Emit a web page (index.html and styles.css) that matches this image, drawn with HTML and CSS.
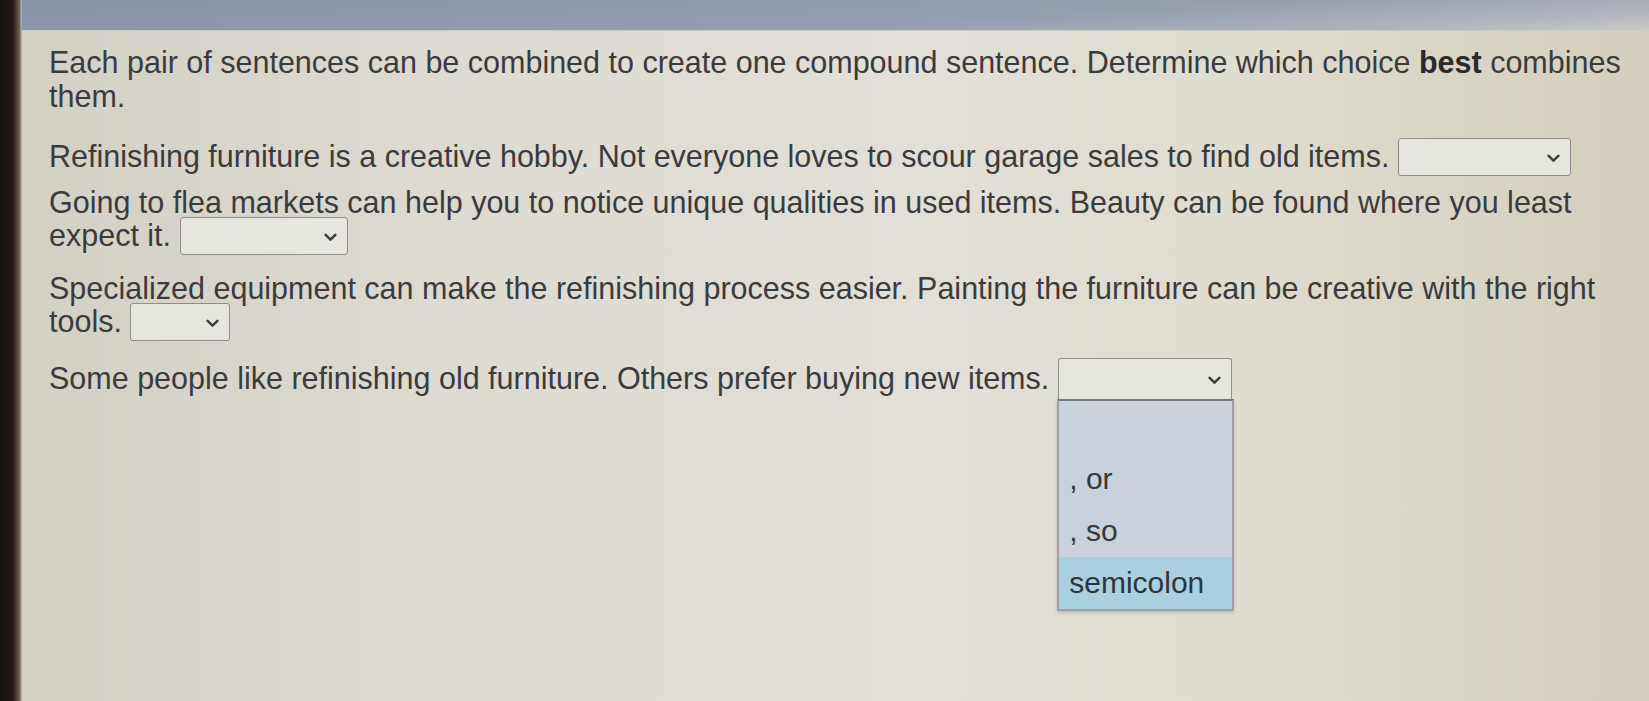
FILE: index.html
```html
<!DOCTYPE html>
<html>
<head>
<meta charset="utf-8">
<link rel="stylesheet" href="styles.css">
</head>
<body>
<div class="screen">
  <div class="bezel"></div>
  <div class="main">
    <div class="topbar"></div>
    <div class="content">
      <p class="intro">Each pair of sentences can be combined to create one compound sentence. Determine which choice <b>best</b> combines<br>them.</p>
      <p class="q q1">Refinishing furniture is a creative hobby. Not everyone loves to scour garage sales to find old items. <span class="sel w1"><svg class="chev" viewBox="0 0 12 8"><polyline points="1.5,1.5 6,6 10.5,1.5"/></svg></span></p>
      <p class="q q2">Going to flea markets can help you to notice unique qualities in used items. Beauty can be found where you least expect it. <span class="sel w2"><svg class="chev" viewBox="0 0 12 8"><polyline points="1.5,1.5 6,6 10.5,1.5"/></svg></span></p>
      <p class="q q3">Specialized equipment can make the refinishing process easier. Painting the furniture can be creative with the right tools. <span class="sel w3"><svg class="chev" viewBox="0 0 12 8"><polyline points="1.5,1.5 6,6 10.5,1.5"/></svg></span></p>
      <p class="q q4">Some people like refinishing old furniture. Others prefer buying new items. <span class="sel w4 open"><svg class="chev" viewBox="0 0 12 8"><polyline points="1.5,1.5 6,6 10.5,1.5"/></svg>
        <span class="list">
          <span class="opt blank"></span>
          <span class="opt">, or</span>
          <span class="opt">, so</span>
          <span class="opt hi">semicolon</span>
        </span>
      </span></p>
    </div>
  </div>
</div>
</body>
</html>
```
FILE: styles.css
```css
html, body {
  margin: 0;
  padding: 0;
  width: 1649px;
  height: 701px;
  overflow: hidden;
}
body {
  font-family: "Liberation Sans", Arial, sans-serif;
  background: #d9d7cd;
}
.screen {
  display: flex;
  height: 701px;
}
.bezel {
  width: 22px;
  flex: none;
  background: linear-gradient(90deg, #161111 0%, #241a18 60%, #6b5f58 88%, #c2bdb3 100%);
}
.main {
  flex: 1;
  display: flex;
  flex-direction: column;
  background: linear-gradient(90deg, #d3d0c6 0%, #dcdad1 25%, #e1dfd7 55%, #dfdcd0 75%, #d4cfbc 100%);
}
.topbar {
  height: 30px;
  flex: none;
  background: linear-gradient(176deg, #8a93a6 0%, #959eaf 60%, #aeb2bb 85%, #c9c9c5 100%);
  border-bottom: 1px solid #c9c9c5;
}
.content {
  padding: 14px 16px 0 27px;
  color: #3b3b3d;
  font-size: 30.5px;
  line-height: 33px;
}
.content p {
  margin: 0 0 16px 0;
}
.content p.intro { margin-bottom: 27px; line-height: 34px; }
.content p.q1 { margin-bottom: 13px; }
.content p.q2 { margin-bottom: 20px; }
.content p.q3 { margin-bottom: 24px; }
.intro b {
  color: #2a2a2d;
}
.sel {
  position: relative;
  display: inline-block;
  vertical-align: -3px;
  height: 38px;
  box-sizing: border-box;
  border: 1.5px solid #8d8d8b;
  border-radius: 3px;
  background: #e6e5de;
  margin: -6px 0;
}
.w1 { width: 173px; }
.w2 { width: 168px; }
.w3 { width: 100px; }
.w4 { width: 174px; height: 42px; margin: -8px 0; }
.chev {
  position: absolute;
  right: 10px;
  top: 50%;
  width: 13px;
  height: 9px;
  margin-top: -3px;
  fill: none;
  stroke: #3c3c3e;
  stroke-width: 2.3;
  stroke-linecap: round;
  stroke-linejoin: round;
}
.open {
  border-bottom-color: #5f5f60;
  border-radius: 3px 3px 0 0;
}
.list {
  position: absolute;
  left: -1.5px;
  top: 40px;
  width: 177px;
  box-sizing: border-box;
  border: 2px solid #9ea2a8;
  border-top: 2px solid #77797c;
  background: #c9d1db;
  display: flex;
  flex-direction: column;
  box-shadow: 0 2px 3px rgba(90, 90, 90, 0.25);
}
.opt {
  display: block;
  font-size: 30px;
  line-height: 52px;
  height: 52px;
  padding-left: 10px;
  color: #36383b;
  white-space: nowrap;
}
.opt.hi {
  background: #a9cfe0;
  color: #2f3538;
}
```
